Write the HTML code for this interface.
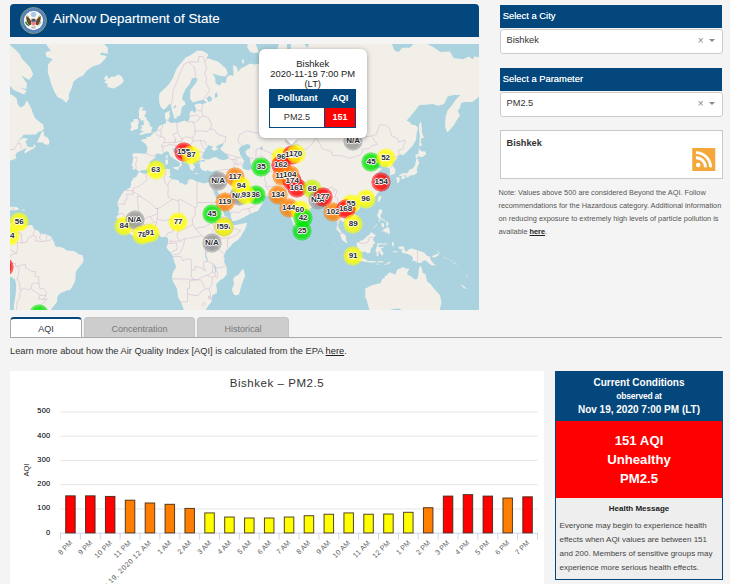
<!DOCTYPE html>
<html><head><meta charset="utf-8"><title>AirNow Department of State</title>
<style>
*{box-sizing:border-box;margin:0;padding:0}
html,body{width:730px;height:584px;overflow:hidden;background:#f4f4f4;font-family:"Liberation Sans",sans-serif;color:#333}
.abs{position:absolute}
#hdr{position:absolute;left:10px;top:4px;width:469px;height:33px;background:#04477c;border-radius:4px 4px 0 0;color:#fff}
#hdr .t{position:absolute;left:43px;top:7px;font-size:13.4px;line-height:16px;white-space:nowrap;text-shadow:0 0 1px rgba(255,255,255,.3)}
#map{position:absolute;left:10px;top:44px;width:469px;height:266px;overflow:hidden;background:#aad3df}
#map svg{position:absolute;left:0;top:0}
.mk{position:absolute;width:20px;height:20px;margin:-10px 0 0 -10px;border-radius:50%;background:radial-gradient(circle closest-side,rgba(var(--c),.82) 0,rgba(var(--c),.82) 70%,rgba(var(--c),.6) 80%,rgba(var(--c),.55) 93%,rgba(var(--c),0) 100%)}
.ml{position:absolute;width:30px;margin:-5px 0 0 -15px;text-align:center;font-size:8px;line-height:10px;font-weight:bold;color:#2a2a2a;text-shadow:-1px 0 .5px #fff,1px 0 .5px #fff,0 -1px .5px #fff,0 1px .5px #fff,0 0 2px #fff,0 0 2px #fff}
#pop{position:absolute;left:249px;top:4.5px;width:107.5px;height:89.5px;background:#fff;border-radius:6px;box-shadow:0 1px 5px rgba(0,0,0,.35);font-size:9.4px;line-height:9.9px;color:#222;text-align:center}
#tip{position:absolute;left:275px;top:94px;width:13px;height:7px;overflow:hidden}
#tip:after{content:"";position:absolute;left:2px;top:-4.5px;width:9px;height:9px;background:#fff;transform:rotate(45deg);box-shadow:0 1px 4px rgba(0,0,0,.35)}
.ph{position:absolute;background:#04477c;color:#fff;font-size:9.4px;line-height:21.5px;padding-left:3.3px;white-space:nowrap;text-shadow:0 0 .6px rgba(255,255,255,.8)}
.sel{position:absolute;background:#fff;border:1px solid #ccc;border-radius:3px;font-size:9.25px;line-height:21px;padding-left:6px;color:#333}
.sel .x{position:absolute;right:18px;top:-.5px;font-size:10px;color:#888}
.sel .a{position:absolute;right:6.6px;top:9.2px;width:0;height:0;border:3px solid transparent;border-top:3.2px solid #888;border-bottom:0}
.tab{position:absolute;top:317px;height:21px;font-size:9px;line-height:22.5px;text-align:center;border-radius:4px 4px 0 0}
.tab.off{background:#cdcdcd;color:#777;height:20px;border:1px solid #c4c4c4;border-bottom:0}
.gl{position:absolute;left:60.5px;width:477.0px;height:1px;background:#e6e6e6}
.ax{position:absolute;left:60.5px;width:477.0px;height:1px;background:#ccd6eb}
.tk{position:absolute;width:1px;height:6px;background:#ccd6eb}
.yl{position:absolute;left:20px;width:30.5px;text-align:right;font-size:7.4px;line-height:10px;color:#222;letter-spacing:.3px;text-shadow:0 0 .4px rgba(0,0,0,.5)}
.bar{position:absolute;width:11.4px;border:1px solid rgba(40,30,20,.75)}
.xl{position:absolute;width:100px;text-align:right;font-size:7.2px;line-height:9px;color:#5e5e5e;white-space:nowrap;transform-origin:100% 50%;transform:rotate(-45deg)}
a{color:#222;font-weight:bold;text-decoration:underline}
</style></head><body>
<div id="hdr">
<svg class="abs" style="left:10px;top:3px" width="27" height="27" viewBox="0 0 27 27"><g style="filter:blur(.3px)"><circle cx="13.500" cy="13.500" r="13" fill="#4778b2" stroke="#b4b46c" stroke-width=".7"/><circle cx="13.500" cy="13.500" r="11.300" fill="none" stroke="#7fa3cf" stroke-width="1.600" stroke-dasharray="1 .6" opacity=".55"/><circle cx="13.500" cy="13.500" r="9.700" fill="#f6f6f3"/><circle cx="13.500" cy="7.400" r="2.700" fill="#a8cbe3"/><path d="M6.300 9c1.800.600 3.600 2.400 4.800 5.200l.300 3.200-2.200 1c-2-2.200-3.400-5.600-2.900-9.400zM20.700 9c-1.800.600-3.600 2.400-4.800 5.200l-.3 3.200 2.200 1c2-2.200 3.400-5.600 2.900-9.400z" fill="#6a4a22"/><path d="M7.200 8.600l1.600 1.200M19.800 8.600l-1.600 1.200" stroke="#c9b04a" stroke-width="1"/><path d="M11.400 12.900h4.200v3.600c0 1.300-2.100 2.300-2.100 2.300s-2.100-1-2.100-2.300z" fill="#ef7f86"/><rect x="11.400" y="12.900" width="4.200" height="1.700" fill="#2d5fa0"/><path d="M11.600 11.800h3.800v1.100h-3.800z" fill="#5a3d1c"/><path d="M5.600 14.800c.5 2 1.700 3.200 3.400 3.600" stroke="#3f8a46" stroke-width="1.500" fill="none"/><path d="M18.300 18.200l2.800-3.400" stroke="#a8a8a8" stroke-width="1.200"/><path d="M11 19.600h5l-.8 1.800h-3.400z" fill="#9a9a9a" opacity=".7"/></g></svg>
<div class="t">AirNow Department of State</div></div>
<div id="map">
<svg width="469" height="266" viewBox="0 0 469 266"><g style="filter:blur(.35px)"><path d="M122.1 110.7L124.4 108.9L132.0 109.4L136.2 109.7L137.3 106.3L137.3 102.7L135.4 99.7L130.7 96.6L133.9 94.9L136.6 95.2L136.2 92.3L137.5 93.1L140.0 92.8L142.6 89.9L143.0 88.4L146.4 87.2L147.8 84.7L148.7 82.2L152.9 80.6L156.1 79.3L155.9 75.7L155.0 73.7L155.0 69.0L159.7 66.5L159.4 70.7L160.3 71.4L158.0 76.4L160.5 79.0L165.6 78.4L166.8 79.3L170.4 78.0L174.4 76.4L177.2 77.7L179.7 74.8L179.5 69.6L180.6 67.2L182.5 66.5L183.7 68.6L185.4 68.6L186.0 64.3L184.2 61.0L188.0 59.5L192.8 59.9L197.0 58.4L193.8 56.1L189.0 56.5L183.1 58.4L180.3 55.3L180.1 50.6L180.4 46.1L186.1 38.7L187.7 35.1L185.6 33.8L182.0 34.2L180.1 39.6L175.7 44.8L172.7 51.4L172.1 55.3L174.9 57.7L175.5 60.3L171.9 63.2L170.9 69.0L170.0 71.7L167.1 72.4L166.6 74.4L164.1 74.4L163.7 71.7L162.4 67.9L160.9 62.1L159.7 59.5L157.7 62.1L154.8 65.1L152.9 65.4L150.2 62.1L149.1 58.0L149.1 52.2L149.5 49.4L152.9 46.1L155.8 43.5L159.5 39.6L162.4 35.1L164.3 30.5L166.2 25.6L169.0 21.6L171.9 17.9L175.7 13.6L181.4 10.8L187.1 6.8L191.8 6.8L195.6 8.5L198.5 10.8L196.6 14.1L202.3 15.8L208.0 17.4L215.6 24.1L217.9 29.0L215.6 32.4L210.8 31.9L205.1 30.5L202.3 29.5L205.1 33.8L205.7 39.6L209.9 41.8L211.8 38.3L215.6 39.2L216.6 33.8L219.4 30.9L223.2 31.9L223.6 28.1L222.8 21.0L227.0 23.1L227.9 28.1L230.8 24.6L234.6 22.6L240.3 19.5L244.1 20.5L247.9 20.0L253.6 19.0L255.5 13.6L261.2 16.3L266.9 19.0L269.8 22.1L270.7 17.9L266.9 14.1L266.9 6.8L270.7 -5.5L276.4 -4.2L277.4 6.8L276.4 17.9L277.4 25.6L274.5 30.5L279.2 28.1L280.2 20.5L279.2 12.5L281.1 0.8L282.1 -5.5L291.6 -8.8L292.5 -2.3L297.3 3.8L303.0 -8.8L310.6 -23.1L329.6 -39.4L339.1 -39.4L354.3 -12.2L348.6 -10.8L354.3 -8.8L363.8 -6.8L373.3 -5.5L380.9 -2.3L384.7 6.8L388.5 7.9L392.3 3.8L399.9 3.8L405.6 -2.3L415.1 -1.1L424.6 3.8L430.3 7.9L439.8 7.4L443.6 14.1L453.1 15.2L458.8 12.5L462.6 15.2L464.5 12.5L474.0 13.6L485.4 17.9L485.4 48.2L475.9 49.0L470.2 51.4L462.6 58.0L455.0 58.0L451.2 58.8L449.3 65.4L447.4 66.1L449.9 71.7L447.0 75.7L443.6 81.6L440.4 85.3L437.3 88.4L435.0 82.2L435.6 72.4L437.5 66.5L441.7 61.8L445.5 56.1L450.2 51.0L443.6 51.0L437.9 52.2L434.1 59.9L428.4 61.8L422.7 59.9L415.1 60.7L409.4 61.0L401.8 70.7L396.7 76.4L400.9 79.0L400.9 80.6L405.6 81.3L408.1 83.8L406.5 89.9L406.2 95.7L402.8 101.4L398.0 106.8L393.2 111.3L390.4 110.2L387.9 112.5L386.0 115.8L382.8 118.3L381.9 120.1L385.3 125.6L385.3 129.2L382.8 130.6L379.8 131.5L380.1 128.0L379.6 124.4L377.1 123.2L377.7 119.6L375.8 118.6L370.6 121.1L371.4 116.9L369.5 116.1L365.7 120.3L363.2 121.5L365.3 124.2L369.1 123.7L372.4 124.9L369.5 126.8L366.3 130.3L368.5 133.8L371.0 137.4L371.2 139.6L368.5 140.9L371.4 142.0L370.4 145.3L367.6 149.2L364.8 153.2L361.9 155.6L356.8 157.7L354.3 158.5L349.5 160.0L349.2 162.0L348.0 159.6L344.8 159.4L342.3 161.6L340.4 164.6L342.9 168.6L346.3 171.6L347.5 176.5L346.7 179.4L342.9 181.3L339.5 184.8L338.7 182.3L335.3 180.4L334.0 178.0L331.3 177.1L330.5 175.5L329.6 175.9L328.3 180.4L328.3 183.7L330.4 186.2L331.5 188.4L334.0 189.6L336.1 192.8L336.2 196.5L337.6 198.7L336.2 198.9L332.1 196.1L330.4 191.9L330.2 189.2L327.7 186.5L326.4 185.6L326.8 182.3L327.1 178.4L325.2 172.6L324.3 169.0L320.9 171.0L318.8 170.6L319.1 166.6L317.2 163.0L314.4 159.6L314.0 157.3L311.5 157.9L308.7 158.9L304.9 159.6L303.9 162.6L301.1 163.8L296.0 169.4L292.2 171.4L291.6 175.5L291.4 178.4L290.3 181.7L288.2 184.4L286.9 186.0L284.9 183.7L283.2 179.4L281.7 176.5L280.6 172.6L279.1 169.6L277.9 164.2L277.9 160.2L276.8 160.4L274.5 161.0L272.6 160.2L270.7 157.9L273.2 156.7L270.3 155.9L267.7 154.4L266.3 151.7L262.5 151.9L256.6 151.9L251.7 151.5L248.5 150.8L246.9 148.1L243.5 148.9L239.3 146.8L236.5 144.2L234.6 141.2L232.5 140.7L230.8 141.8L231.8 144.9L233.6 147.7L235.0 148.9L236.1 152.7L236.9 150.0L237.6 152.3L237.4 153.8L239.5 154.0L242.2 154.0L244.7 151.7L246.6 149.8L246.8 152.5L248.3 154.6L251.1 155.2L253.2 157.5L251.3 161.6L249.4 164.6L247.9 167.0L244.7 168.0L238.8 170.6L232.7 174.1L225.1 176.9L222.2 177.1L220.9 173.0L220.7 169.6L217.5 164.6L214.1 160.0L212.8 155.4L210.3 152.3L207.2 146.4L205.7 144.9L206.1 142.7L205.0 145.9L204.6 146.4L202.9 144.7L201.5 141.8L201.0 139.0L204.6 138.7L205.9 136.0L207.2 132.6L207.8 128.5L208.0 126.6L205.7 126.3L203.4 127.5L200.4 127.8L197.7 126.1L195.6 127.5L192.8 126.3L191.5 125.6L189.6 122.5L190.5 120.8L189.2 119.6L189.4 118.1L191.8 117.4L194.7 117.4L194.9 115.8L194.9 115.3L199.1 115.6L203.2 113.3L206.5 113.3L208.9 115.1L212.8 116.1L215.6 115.8L218.4 114.6L218.6 112.0L215.6 109.4L212.8 107.3L210.5 105.5L210.8 103.6L212.4 102.2L214.1 99.4L210.8 100.0L206.7 101.9L206.1 103.6L208.9 104.9L206.9 105.5L204.2 107.1L203.1 106.5L201.3 104.4L203.4 102.5L200.4 101.9L198.9 101.1L197.9 101.6L196.0 104.9L193.9 108.1L192.8 110.7L192.2 112.0L193.0 114.3L194.9 115.3L194.5 115.8L191.8 116.1L190.3 117.1L189.0 116.6L186.1 116.1L184.8 117.6L185.8 118.1L183.1 117.4L182.7 119.6L183.9 121.1L185.2 123.2L183.3 124.7L183.5 126.8L182.2 126.8L180.8 126.1L179.9 123.7L179.7 122.3L178.0 119.6L176.5 117.1L176.6 114.1L174.8 112.0L171.9 110.2L169.0 108.1L167.9 105.5L166.8 104.9L165.4 105.5L165.6 103.6L163.2 104.4L163.0 106.8L165.4 109.4L166.6 112.3L170.0 113.6L172.8 116.1L174.8 117.9L174.4 118.8L171.9 117.1L171.1 118.8L172.1 120.8L170.2 123.5L169.3 123.2L170.2 119.6L169.2 118.3L167.7 116.9L164.3 115.3L162.8 113.8L160.5 112.3L159.5 110.7L159.0 108.4L156.7 107.1L154.8 108.4L153.8 108.6L151.4 110.5L149.1 109.7L147.2 109.4L145.5 110.5L145.7 113.3L143.6 115.1L141.1 116.4L139.2 119.1L140.0 121.3L138.5 123.2L138.3 124.2L135.8 126.1L131.2 126.3L129.5 127.8L127.8 127.1L127.4 125.6L125.5 125.2L122.7 125.6L122.9 122.3L121.5 121.3L122.7 117.9L123.1 114.1ZM128.4 128.5L129.5 128.2L133.9 129.6L135.8 130.1L137.7 128.7L139.6 128.2L142.1 126.8L145.3 126.1L149.1 126.1L152.9 125.6L156.7 124.9L158.4 124.9L160.5 125.6L159.5 127.1L160.1 129.2L160.5 131.5L159.0 132.6L159.2 133.6L160.9 134.2L163.3 135.4L166.2 135.8L168.7 136.5L169.4 138.5L172.8 139.6L175.7 140.9L177.6 139.4L177.6 136.7L180.4 135.1L183.3 135.8L187.1 137.8L190.9 138.5L194.7 139.6L197.2 138.5L198.5 138.1L201.0 139.0L201.5 141.8L201.7 143.8L203.2 146.4L204.2 149.2L206.1 153.4L207.2 155.4L209.7 158.5L210.3 160.6L210.5 164.6L212.8 166.6L214.3 171.6L217.5 173.6L220.3 176.5L221.9 177.5L221.9 179.4L224.1 181.3L227.0 180.8L230.8 180.0L234.6 179.2L237.1 178.8L236.5 181.3L234.6 186.2L232.7 189.0L230.8 192.8L227.0 196.6L223.2 199.1L220.3 202.4L218.4 204.8L216.2 206.3L214.6 210.0L213.5 212.8L214.6 214.7L214.3 218.6L215.6 221.1L216.6 222.4L216.7 226.3L216.9 230.2L213.7 234.2L209.9 236.2L208.0 238.2L206.1 240.2L206.7 244.3L207.1 248.4L202.3 251.5L201.9 254.7L201.2 258.4L198.5 261.2L196.6 264.5L193.8 267.4L190.9 269.5L188.4 270.2L183.3 270.4L177.6 272.0L174.6 270.6L174.4 267.2L172.5 262.3L170.9 258.1L168.1 253.6L167.1 246.3L166.8 244.3L162.4 236.2L162.0 232.2L163.3 227.3L165.6 224.4L165.8 221.5L164.3 218.2L163.0 212.8L162.4 210.9L160.5 208.6L157.7 205.6L156.3 202.7L157.7 200.4L158.0 197.6L158.2 195.3L157.7 193.8L155.8 192.7L152.9 193.0L151.0 193.2L149.7 191.5L148.0 189.4L144.3 189.4L141.5 190.2L138.7 191.3L135.8 192.3L133.5 191.7L131.0 191.5L128.2 192.3L125.3 193.0L122.5 191.5L119.1 189.2L116.8 187.1L114.5 184.6L114.3 183.3L111.7 180.8L110.9 178.6L107.9 177.7L107.7 175.5L106.3 173.2L108.2 170.6L108.6 166.6L109.0 163.6L107.3 160.6L107.5 158.5L109.2 154.8L111.3 151.3L112.2 149.6L114.5 146.6L117.8 145.3L120.6 142.7L121.2 140.5L121.0 138.3L123.3 134.2L126.7 132.4ZM233.3 224.4L235.2 231.2L234.2 234.2L231.8 240.2L229.8 247.4L228.9 250.5L225.5 251.5L223.2 249.4L221.9 245.3L224.0 240.2L223.2 235.2L225.1 232.2L227.9 231.2L230.8 227.3ZM128.8 91.1L132.9 90.5L136.8 89.3L140.5 89.0L142.3 87.8L140.9 86.9L142.8 83.5L140.2 82.2L139.8 80.3L139.2 78.4L136.9 75.7L135.8 72.7L133.9 72.4L135.8 69.3L136.2 66.8L132.9 66.5L132.0 65.8L133.7 63.2L130.1 63.2L128.6 67.2L129.0 70.7L129.0 74.8L130.5 74.1L130.3 76.7L133.1 76.1L133.9 79.3L133.7 81.3L131.0 81.3L131.6 82.8L131.8 84.4L129.7 85.6L131.4 86.6L133.5 87.2L133.9 87.8L131.0 88.4ZM128.2 84.7L127.8 81.3L129.0 77.4L127.6 75.1L124.0 75.1L123.3 77.7L120.6 78.4L121.0 81.3L121.7 83.2L120.0 85.3L121.2 86.9L123.8 86.0L127.2 85.0ZM96.8 42.3L100.7 44.0L103.9 44.4L109.2 41.4L111.9 39.6L113.8 36.5L111.7 32.4L108.6 30.5L104.8 32.4L101.0 32.8L98.8 35.1L96.8 30.9L94.0 34.2L94.9 36.0L97.6 35.6L94.0 38.3L97.8 40.1ZM56.2 58.8L52.2 55.3L47.5 53.0L44.6 48.2L41.8 41.8L39.8 35.1L37.8 28.1L38.0 20.5L42.7 15.2L36.0 12.5L35.7 7.9L40.8 6.8L34.2 -2.3L33.2 -12.2L29.4 -23.1L25.6 -26.9L10.4 -26.9L0.9 -48.5L16.1 -75.3L44.6 -95.3L82.6 -110.9L101.6 -88.2L116.8 -81.6L105.4 -63.8L106.3 -43.8L103.5 -30.9L101.6 -19.3L102.5 -12.2L97.8 -6.8L97.8 -0.4L93.0 -1.1L97.8 3.8L97.8 9.7L91.2 8.5L90.2 10.8L96.8 11.9L94.9 15.2L90.2 20.0L82.6 22.6L76.9 26.6L73.1 31.4L68.3 33.8L63.6 37.4L61.7 44.0L58.8 50.2L58.8 55.0ZM-50.4 141.6L-4.8 141.6L-3.8 129.9L-4.8 125.9L-3.1 122.5L-1.0 119.1L-1.0 117.1L2.8 115.8L6.6 114.3L5.3 111.8L6.2 109.2L9.4 107.3L12.3 106.0L14.2 104.9L17.0 104.1L14.2 108.1L15.2 109.4L19.0 106.8L23.7 104.6L25.6 102.7L24.7 100.0L22.8 103.3L19.9 103.3L17.0 102.2L16.5 99.7L15.2 97.7L17.4 95.7L17.6 94.6L13.2 94.0L9.4 96.0L6.6 99.4L7.6 97.2L12.3 92.8L13.4 90.8L19.9 90.5L25.6 90.5L28.5 87.8L31.7 86.9L33.8 84.7L33.2 80.6L30.3 78.4L25.6 74.8L22.8 69.6L21.8 65.4L19.0 59.9L16.7 56.5L14.2 61.8L10.4 63.6L7.6 59.9L6.6 54.2L2.8 51.4L-1.9 49.0L-7.7 48.2L-8.6 54.2L-7.7 59.9L-8.6 65.4L-5.8 70.7L-10.5 77.4L-11.4 86.9L-50.4 88.4ZM26.9 98.3L33.2 98.6L34.2 100.3L38.5 100.8L39.5 98.6L38.9 95.7L37.6 93.4L34.2 92.0L33.6 87.5L34.2 86.6L31.3 88.4L30.0 92.0L28.5 94.9ZM23.1 30.0L19.9 23.1L12.3 15.2L9.4 9.7L4.7 5.0L-1.9 -0.4L-8.6 -5.5L-31.4 -5.5L-31.4 39.6L-8.6 39.6L-1.9 39.6L3.8 46.1L8.9 48.2L14.2 50.6L16.7 46.9L9.4 43.1L16.1 45.2L17.0 39.6L11.3 31.4L19.0 36.0L21.8 32.8ZM-7.7 185.2L-3.8 181.3L-2.5 180.2L0.9 179.6L3.8 177.7L3.4 180.4L3.9 182.3L6.6 179.4L6.6 178.0L9.4 180.0L10.4 181.3L14.2 181.1L17.0 181.9L19.9 181.0L21.8 181.0L22.8 182.3L24.1 185.2L27.5 186.2L30.3 189.4L35.1 190.2L38.0 190.9L41.4 193.0L43.1 196.6L44.6 199.5L44.6 201.4L47.5 203.3L49.3 202.7L54.1 204.3L56.0 206.3L59.8 206.7L63.6 206.9L66.5 208.6L69.3 210.5L72.5 211.3L73.5 215.1L73.1 218.6L70.2 221.7L68.3 224.4L66.5 226.3L65.5 230.2L65.5 235.2L64.2 239.2L61.9 243.2L60.0 246.1L57.0 246.3L54.1 247.8L51.2 248.8L48.4 251.1L47.3 253.6L47.1 257.5L44.6 261.2L41.8 264.5L39.8 267.9L38.0 270.2L35.1 272.2L31.3 271.3L28.8 270.4L31.3 276.0L21.8 282.0L16.1 287.0L16.1 297.3L10.4 311.4L8.5 317.5L0.9 320.6L-2.9 311.4L-1.0 297.3L-0.1 284.5L0.9 277.2L3.8 267.9L3.8 261.2L5.7 250.5L6.2 240.2L4.7 235.2L-2.9 230.8L-5.8 227.3L-8.6 220.5L-11.4 215.7L-14.7 211.9L-13.0 207.7L-13.9 204.3L-12.4 200.4L-10.1 198.5L-7.3 193.8L-7.7 189.0ZM388.3 132.6L390.4 131.9L393.2 131.7L396.1 131.3L396.5 133.1L397.6 133.8L399.7 131.7L400.5 131.3L403.3 131.3L405.2 130.3L407.3 128.7L406.7 126.1L407.5 122.5L409.4 119.3L408.4 117.1L408.3 114.8L406.2 115.3L405.6 118.3L405.2 121.3L403.3 123.7L400.5 126.1L400.3 124.4L399.3 126.1L398.0 128.5L397.0 128.9L394.2 129.2L391.5 129.4L389.3 131.5ZM388.3 132.9L390.0 134.5L389.4 137.2L388.5 138.7L387.0 139.0L387.0 136.0L386.0 134.9L386.2 133.8ZM391.4 132.6L394.6 131.9L395.5 133.1L394.6 134.2L392.3 135.4L391.2 134.2ZM406.2 114.6L407.9 113.8L407.5 112.0L411.9 113.3L416.0 110.2L415.5 107.6L411.3 107.3L409.0 104.4L408.6 108.1L408.1 110.2L406.2 110.2L405.2 112.5ZM409.4 102.7L412.2 100.8L410.7 98.6L411.3 94.3L414.1 93.7L411.9 88.4L411.9 83.8L411.1 78.0L410.0 78.4L409.0 81.3L409.0 86.3L409.8 91.4L409.4 97.2ZM369.5 151.9L371.4 152.3L370.4 155.4L369.1 158.5L367.8 156.5L368.2 153.8ZM346.1 164.0L349.5 162.4L350.5 163.2L349.2 165.6L347.6 166.2L346.1 165.2ZM368.7 165.6L371.8 165.6L372.4 168.6L370.4 171.0L370.6 173.6L372.0 174.5L375.2 176.5L375.2 177.5L372.5 175.7L369.5 175.1L368.7 173.9L367.6 172.6L367.2 170.0L368.4 169.6ZM371.4 188.1L374.2 185.0L377.9 182.7L379.6 185.2L379.9 189.0L378.0 190.6L377.7 188.4L375.2 188.6L373.9 187.1ZM375.8 177.5L378.0 178.0L378.4 180.4L377.1 182.3L376.1 181.3L376.7 179.4ZM371.4 178.8L373.7 179.4L374.2 181.3L373.9 183.7L372.4 182.9L371.4 181.3ZM362.3 185.6L366.6 181.3L367.0 179.8L365.7 181.3L362.9 184.2ZM368.4 175.7L370.3 176.1L369.9 177.8L368.9 177.3ZM346.7 200.8L346.7 198.4L349.2 198.0L350.9 196.6L354.3 195.3L356.2 192.7L359.0 190.9L361.3 188.1L363.2 189.4L366.1 191.5L363.8 193.0L363.0 195.1L363.8 197.6L365.7 199.5L363.4 200.1L362.9 202.7L360.9 204.3L360.6 207.1L360.0 209.0L357.3 209.2L355.2 207.7L352.0 208.1L349.0 206.9L348.6 204.3L347.1 202.7ZM339.5 214.4L341.4 212.8L345.4 214.2L349.5 214.5L350.5 213.6L353.7 214.5L357.1 216.1L357.0 218.0L353.4 217.4L348.6 216.8L344.8 216.3L341.8 215.5ZM357.1 217.0L361.3 217.0L365.7 217.2L365.7 218.4L360.9 218.6L357.1 218.2ZM367.2 217.4L373.3 217.0L373.3 218.2L367.2 218.4ZM374.2 221.1L377.1 218.6L381.5 217.4L379.0 219.5L375.2 221.1ZM365.7 219.5L369.1 220.1L367.6 221.1ZM367.2 199.9L369.1 198.9L372.4 199.5L375.6 199.5L377.5 198.4L376.3 200.6L372.4 200.4L369.1 200.6L367.8 202.7L370.1 203.1L373.9 202.7L374.1 203.3L371.0 204.6L372.2 207.5L373.7 209.4L372.4 211.7L370.4 210.1L369.3 206.7L368.4 208.1L368.4 211.9L366.6 211.9L366.6 208.1L365.3 206.5L366.3 203.9L367.2 201.0ZM388.5 202.9L391.4 202.2L394.2 202.9L394.6 206.2L396.1 207.7L399.9 204.8L401.8 204.4L407.5 206.3L414.1 208.6L416.6 211.5L419.9 212.8L420.4 215.3L421.8 217.6L424.6 220.5L426.1 221.7L420.8 220.9L417.9 218.2L415.1 216.3L412.2 217.2L411.3 219.0L407.5 218.8L403.7 216.6L401.8 217.4L403.1 214.7L401.8 211.9L397.0 209.8L393.2 209.0L391.9 209.2L392.3 207.1L390.4 206.7L393.8 205.8L390.4 205.2L388.5 204.3ZM421.4 212.2L424.6 210.9L428.4 209.4L428.8 210.9L426.5 212.8L423.6 213.4ZM381.9 198.0L383.8 198.5L384.1 200.8L382.8 202.9L382.2 200.8ZM382.8 207.1L388.1 207.5L387.5 208.4L382.8 208.1ZM355.2 244.3L356.6 243.9L361.5 241.2L365.7 240.2L370.4 239.2L371.8 236.2L372.4 234.2L374.4 234.8L374.6 232.6L377.1 230.8L379.9 228.3L382.8 229.8L385.6 230.2L386.2 228.3L387.2 225.9L388.5 224.8L391.4 224.4L391.4 223.0L396.1 224.4L399.5 224.8L398.0 227.3L397.0 230.2L400.9 232.2L404.3 235.2L407.1 235.2L408.4 231.2L408.6 226.3L409.8 222.4L410.5 221.8L412.2 225.3L412.6 228.9L415.7 230.2L416.0 233.2L417.4 237.8L420.8 240.2L423.6 244.3L426.1 246.9L429.9 251.1L430.9 255.8L431.4 258.4L430.3 263.4L429.4 266.8L427.4 269.0L426.5 271.3L424.6 278.4L418.9 280.8L413.2 280.3L406.5 279.6L401.8 273.6L398.0 272.5L396.1 271.3L394.2 267.9L389.4 264.5L384.7 264.7L379.0 266.3L375.2 267.9L374.2 270.2L367.6 270.2L363.8 272.5L358.1 270.9L359.4 265.6L358.1 261.2L356.6 255.8L354.9 252.6L355.4 249.4ZM291.2 182.9L293.1 184.2L295.0 187.1L294.6 189.4L292.7 190.2L291.4 189.0L291.0 185.8ZM237.4 3.8L240.3 7.9L244.1 9.1L248.9 8.5L246.0 0.8L245.0 -5.5L247.9 -15.7L253.6 -26.9L268.8 -35.1L265.0 -23.1L253.6 -15.7L249.8 -5.5L240.3 -5.5L237.4 0.8ZM163.2 123.2L169.2 122.5L168.3 126.3L163.3 124.2ZM155.2 115.8L158.0 115.8L157.8 120.3L155.6 120.8ZM155.9 112.0L157.5 110.7L157.7 114.6L156.3 114.6ZM184.2 128.9L189.6 129.6L185.2 130.3ZM201.0 130.3L205.3 128.7L204.0 130.3L202.3 131.3ZM-1.9 166.0L0.9 162.8L6.6 163.0L9.6 165.4L4.7 166.2L1.8 166.2ZM11.9 165.6L15.0 165.8L14.6 166.6L11.9 166.6ZM451.2 240.4L454.0 242.2L456.9 244.9L455.9 245.1L453.1 243.2L450.8 240.8ZM240.9 177.3L243.1 177.3L242.2 177.8ZM144.2 119.3L145.7 118.6L145.9 119.8L144.9 120.1ZM231.8 15.8L233.6 15.2L234.2 19.0L232.3 19.5ZM433.3 211.9L435.8 214.4L434.9 214.5L433.5 212.8ZM436.9 214.2L438.9 215.3L438.5 215.7L436.8 214.5ZM440.2 215.9L443.2 217.4L442.8 217.8L440.0 216.5ZM442.8 219.1L445.1 220.1L444.2 220.3L442.8 219.7ZM444.7 217.4L446.3 219.5L445.7 219.7L444.5 217.8ZM446.1 221.1L448.0 221.8L447.0 222.0ZM456.1 229.6L457.3 231.4L456.3 231.4ZM457.3 232.2L458.4 233.2L457.7 233.4ZM459.2 235.4L459.9 235.8L459.2 236.0ZM461.1 238.8L461.6 239.4L461.1 239.4ZM426.1 206.3L429.4 208.6L430.3 210.3L429.5 209.4L426.5 206.9ZM324.1 198.7L325.6 199.7L325.0 200.3ZM326.9 203.3L328.3 204.6L327.7 204.8ZM339.7 204.4L342.3 206.3L341.0 207.1Z" fill="#f2efe9"/><path d="M229.8 103.6L232.7 101.4L237.4 100.0L240.3 101.1L239.9 104.4L237.1 105.5L236.5 106.8L235.2 107.3L236.3 110.7L239.2 113.3L240.3 115.8L240.1 118.3L241.6 120.3L242.0 124.9L238.4 126.3L235.5 125.6L232.7 124.4L232.5 122.0L233.3 120.1L233.6 117.6L235.2 117.4L233.6 116.6L232.3 113.8L230.2 110.7L229.8 108.1L228.5 106.3ZM200.0 202.4L201.3 200.8L204.2 200.8L204.6 203.3L203.2 206.2L200.4 206.3ZM336.6 86.6L338.7 86.9L341.9 83.8L345.8 80.3L348.2 75.7L348.4 73.1L347.1 73.7L344.8 78.4L341.0 82.2L338.1 84.7ZM279.2 104.9L281.1 101.1L285.9 100.5L289.7 100.5L289.3 101.9L284.9 101.9L281.7 103.8L280.6 105.7ZM250.4 103.3L252.1 102.2L252.8 104.6L251.3 106.5L250.4 105.5ZM198.3 58.0L201.3 56.9L202.3 54.2L199.4 51.8L196.6 54.2ZM205.1 54.2L208.0 52.2L206.5 47.7L204.8 50.2ZM195.1 207.9L196.0 210.0L198.1 217.4L197.4 217.6L195.1 212.4ZM204.2 219.7L205.5 222.4L206.1 228.3L205.3 228.7L204.4 223.4ZM163.2 63.6L165.8 60.7L166.2 62.9L163.9 64.3Z" fill="#aad3df"/><path d="M122.9 113.6L127.2 113.6L126.5 118.3L125.3 119.6L126.3 122.8L125.5 125.2M136.2 109.7L140.9 111.5L145.5 112.3M144.3 88.1L147.6 91.4L151.0 92.8L155.2 94.3L154.0 98.3L151.0 102.2L152.9 103.0L152.9 107.6L153.8 108.6M166.8 79.3L167.5 88.4L162.8 90.5L165.8 94.9L164.3 98.6L157.8 98.6L154.0 98.3M152.9 81.3L151.0 86.0L151.0 89.0L151.0 92.8M146.1 87.2L151.0 86.0M155.9 76.1L158.2 76.4M177.2 77.7L182.9 77.7L185.0 83.8L185.2 89.9L182.5 94.0L175.7 92.8L171.9 95.2L167.5 88.4M152.9 103.0L159.5 100.5L165.6 101.4L165.6 103.6M164.3 98.6L165.8 94.9M164.3 98.6L171.9 97.2L171.9 95.2M171.9 97.2L170.6 100.5L165.6 101.4M182.5 94.0L183.1 97.2L179.5 102.2L178.2 102.5L175.3 103.0L170.6 100.5M183.1 97.2L190.1 96.3L193.2 104.1L196.0 104.9M190.1 96.3L195.1 97.2L196.6 101.6M193.9 108.9L190.9 107.9L182.7 107.6L180.3 105.7L178.2 102.5M182.7 107.6L182.2 112.5L183.1 115.1L189.8 114.1L192.8 113.3M189.8 114.1L189.0 116.6M176.5 113.6L178.7 115.8L179.5 116.4L183.1 115.1M175.7 105.7L176.5 109.4L174.8 112.0M165.6 104.1L170.6 100.5M169.6 104.9L175.7 105.7L176.1 103.0M176.5 109.4L178.5 111.0L180.4 112.5L182.2 112.5M177.6 111.8L176.5 113.6M160.9 62.1L162.8 54.2L163.0 46.1L167.1 37.4L169.0 31.9L173.8 20.5L178.5 17.9M185.6 33.8L184.6 23.6L178.5 17.9M178.5 17.9L188.4 17.9L189.0 12.5L192.8 12.5L194.7 17.4L198.1 13.6M194.7 17.4L196.6 24.6L194.7 28.5L196.6 34.2L196.0 38.3L199.6 46.5L192.8 56.1M192.8 59.9L191.7 67.2L193.2 71.7L190.1 73.4L188.6 76.1L184.2 79.0L182.9 77.7M186.0 65.8L191.7 67.2M179.7 72.1L187.1 71.0L190.1 73.4M184.4 86.9L191.8 86.9L197.7 87.5L200.0 85.0M193.2 71.7L198.3 73.7L201.7 80.9L200.0 85.0L205.0 86.0L207.2 90.2L211.8 91.7L215.8 92.6L215.2 97.5L212.2 99.7M215.6 109.7L222.8 111.8L227.9 113.6L231.9 113.8M218.4 114.6L222.2 115.6L225.1 115.1L227.9 113.6M222.2 115.6L224.7 119.1L223.8 123.2L224.7 125.2M224.7 119.1L227.9 121.1L230.8 119.1L232.5 122.0M225.1 115.1L227.9 121.1M208.4 128.0L209.3 126.1L211.8 126.1L217.1 125.4L220.2 125.4L224.7 125.2M220.2 125.4L217.9 130.8L213.3 134.0L209.5 136.5L207.2 135.6M213.3 134.0L214.1 136.9L216.4 137.4L219.4 139.2L224.5 143.3L227.9 143.6L230.2 141.6L230.8 141.8M224.7 125.2L227.0 128.7L225.9 132.6L230.2 139.4L230.8 141.6M227.9 143.6L229.8 144.7L231.6 144.9M206.1 142.7L208.2 143.3L210.8 141.6L211.8 140.5L209.9 138.3L214.1 136.9M207.2 135.6L207.1 138.3L206.1 142.7M206.3 134.7L207.2 135.6L207.6 134.2L209.1 132.2L208.0 131.3M220.9 169.8L221.7 167.8L228.9 168.6L232.3 165.6L238.4 164.6L244.1 162.6L245.4 158.5L244.5 157.1L239.5 156.7L237.6 154.0M238.4 164.6L240.5 169.4M244.5 157.1L246.0 154.2L246.4 151.1M204.6 138.7L205.9 142.7M242.0 124.9L246.4 123.0L250.8 124.2L255.9 126.6L255.5 131.5L254.5 133.3L255.3 138.3L257.0 139.4L255.3 142.0M255.3 142.0L259.7 147.7L256.6 151.9M255.3 142.0L258.4 142.9L265.6 141.8L266.3 139.0L271.3 137.4L272.6 133.3L274.9 132.4L275.6 127.3L281.9 125.2M255.9 128.9L262.1 127.3L265.9 124.7L268.8 125.6L275.6 126.3L275.6 122.5L281.9 125.2M239.3 113.8L246.0 115.1L246.0 105.5L250.9 103.8L255.5 107.1L265.0 110.7L268.8 115.8L272.6 113.3L274.5 112.5L279.2 110.7L281.5 110.2L292.0 112.8L292.2 105.5L296.4 104.9L302.0 100.0L305.5 93.7M246.0 115.1L250.9 111.5L253.6 112.8L257.4 117.1L265.9 124.7M272.6 113.3L271.6 117.9L274.5 119.6L279.8 119.3L281.9 125.2M279.8 119.3L280.2 117.6L285.7 115.8L292.0 112.8M268.8 115.8L269.9 118.1L267.9 120.3L268.8 125.6M274.5 112.5L274.5 117.9L278.3 116.4L273.5 116.1M228.3 95.7L229.8 90.5L237.4 86.6L243.5 88.4L252.8 89.3L256.4 87.5L256.6 79.3L263.5 77.7L270.7 74.4L274.5 78.4L279.2 80.6L284.9 78.0L291.6 89.0L298.2 88.4L305.5 93.7M228.3 95.7L227.9 97.5L231.8 101.1L232.7 101.4M305.5 93.7L314.4 89.0L325.8 91.4L326.4 85.3L334.0 87.2L338.1 90.5L349.9 93.7L361.3 92.0M306.4 94.0L312.3 104.6L320.9 107.3L322.8 111.5L333.0 112.0L339.1 114.3L349.5 111.3L352.4 108.6L352.2 105.2L359.4 104.4L361.1 101.9L367.4 100.5L361.3 92.0M361.3 92.0L366.3 90.5L369.5 81.3L374.4 80.6L379.0 83.5L381.9 92.0L387.9 94.6L388.5 98.0L395.5 96.0L392.7 105.2L388.5 106.0L389.1 109.7L387.9 112.5M387.9 112.5L382.8 113.3L380.7 113.8L375.8 118.6M380.1 123.7L383.6 121.8M344.8 159.4L342.1 156.7L339.7 155.9L333.8 157.7L331.9 160.2L329.8 159.6L327.7 158.5L327.5 154.4L324.9 152.7L327.1 146.8L324.7 145.5M324.7 145.5L322.2 142.9L314.4 146.6L308.3 145.9L307.0 146.2L303.0 145.9L293.5 141.2L289.5 138.7L289.1 135.8L290.6 134.9L289.3 131.9L287.4 129.2L281.9 125.2M307.0 146.2L307.0 149.2L301.1 148.7L291.8 144.2L293.5 141.2M308.3 145.9L308.7 148.5L314.4 148.3L314.4 146.6M269.2 155.0L274.5 153.6L271.8 147.7L276.4 145.9L280.0 141.6L281.3 138.3L282.7 136.5L280.2 134.5L280.2 131.0L287.4 129.2M308.7 158.9L308.1 153.8L307.0 149.2L310.2 150.2L315.2 152.3L312.9 155.4L315.0 161.2M315.5 160.0L316.9 154.4L319.5 151.3L324.7 145.5M326.9 182.3L328.1 178.4L326.2 172.6L327.5 169.8L325.4 165.6L329.8 162.0M329.8 162.0L331.9 167.6L333.6 166.2L338.5 167.6L340.2 173.7L334.2 175.3L335.1 179.0M333.8 157.7L337.2 161.8L339.1 165.2L344.0 173.2L340.2 173.7M344.0 173.2L343.9 177.8L340.6 179.2L338.0 181.5M329.8 162.0L329.8 159.6M329.8 189.2L333.6 189.6M347.8 197.6L352.0 199.5L357.7 198.5L359.6 193.2L363.0 193.4M407.5 206.3L407.5 218.8M375.4 219.3L377.3 219.0L377.1 219.7M135.8 130.1L137.3 136.0L132.9 139.4L129.2 142.0L123.1 144.4L123.1 147.4M114.5 146.6L123.1 146.6M123.1 147.4L123.1 150.2L116.8 150.2L116.8 155.4L114.9 156.5L114.9 160.0L107.3 160.0M123.1 147.4L130.5 152.3L141.9 160.4L145.9 164.6L147.6 164.4L147.6 169.6L140.0 172.6L138.7 172.6M130.5 152.3L127.2 152.3L129.2 171.6L121.5 171.8L117.8 171.4L116.4 173.0M145.9 164.6L150.6 163.6L153.8 161.0L162.4 155.4L158.6 153.4L157.7 149.4L158.4 144.9L157.7 141.2L155.4 139.4L153.8 133.8L155.4 130.8L155.9 125.9M157.7 141.2L159.2 137.8L161.4 136.3L161.4 134.5M187.1 137.8L187.1 158.5L209.7 158.5M187.1 158.5L187.1 162.6L185.2 163.6L185.2 171.2L182.3 174.5L182.3 177.1L183.1 180.4L184.4 182.9M162.4 155.4L168.1 156.5L170.0 155.4L185.2 163.6M168.1 156.5L169.0 160.6L169.2 169.0L165.4 175.1M165.4 175.1L158.6 175.9L152.9 176.5L147.2 175.1L146.4 179.0M147.6 169.6L147.2 175.1M143.8 177.7L146.4 179.0M208.9 173.9L208.2 177.1L204.4 181.3L204.4 185.0L202.3 186.5L207.8 192.7L204.2 193.4L198.1 194.7L191.7 191.7L185.6 184.8L184.4 182.9M204.4 183.3L204.0 181.9L201.2 179.0L194.7 182.9L189.9 183.3L185.6 184.8M207.8 192.7L212.0 194.6L217.5 193.8L219.4 193.6L217.5 196.1L217.5 202.9L218.4 204.6M219.4 193.6L225.1 191.9L230.8 186.2L228.9 186.2L221.3 183.3L221.3 179.4M208.9 173.9L211.8 172.6L215.6 173.6L220.2 177.5M208.9 173.9L209.9 168.6L212.8 166.6M214.1 210.3L211.0 207.1L204.2 203.3L197.5 203.3L195.8 204.1M204.2 193.4L206.1 198.2L204.2 200.8L204.2 203.3M198.1 194.7L199.1 197.2L195.8 204.1L195.1 207.9L195.5 209.8M197.5 203.3L198.1 206.0L195.1 207.9M198.1 206.0L197.4 208.6L195.5 209.8M198.1 217.4L194.1 217.6L193.6 219.1L193.9 224.4L196.2 227.1L191.3 224.0L185.2 222.4L185.2 225.9L181.4 226.3L181.4 222.4L181.0 215.3L176.6 214.7L173.0 216.8L170.9 212.6L164.3 212.6L163.0 212.6M163.3 210.5L167.0 210.7L169.8 209.4L173.2 202.5L174.9 194.7L182.3 193.6L191.7 191.7M162.0 234.8L166.2 235.0L174.6 235.0L183.3 235.4L187.7 235.8M181.4 226.3L181.4 232.6L183.3 235.4M177.6 244.3L177.6 250.1L177.6 257.7L170.9 258.1M177.6 244.3L179.5 244.3L179.5 236.8L183.9 236.2L187.7 235.8M177.6 250.1L183.3 251.1L188.2 251.7L190.9 247.8L195.5 244.7M187.7 235.8L190.9 236.2L195.5 244.7L199.1 245.1L202.1 239.8L202.3 233.6L197.4 231.4L194.5 232.0L187.7 235.8M199.1 245.1L200.4 249.4L200.6 254.3L202.1 254.5M202.3 233.6L205.1 232.2L206.7 234.2L207.8 230.0L205.3 223.6L210.8 223.8L216.4 221.5M197.4 231.4L202.3 228.3L202.9 219.7L202.1 219.3L198.1 217.4M202.9 219.7L205.1 223.4M202.3 228.3L205.1 229.2L205.1 232.2M191.8 260.3L193.8 258.4L195.5 260.1L193.2 262.5L191.8 260.3M198.5 252.2L200.4 252.6L200.2 255.1L198.5 254.7L198.5 252.2M108.2 170.6L112.4 169.4L116.4 173.0L117.9 177.7L113.6 177.3L107.9 177.7M107.7 175.3L113.0 175.3L113.0 176.1L107.7 176.3M117.9 177.7L123.8 180.4L124.6 181.9L123.6 186.9L121.7 187.3L117.8 188.3M114.3 184.2L120.0 185.2L117.8 188.3M111.1 180.4L113.6 179.0L113.6 177.3M125.3 193.0L123.6 186.9M124.6 181.9L129.2 181.5L134.3 183.3L134.5 191.7M141.9 189.8L140.5 186.2L139.6 180.2M142.6 189.6L142.6 184.2L141.3 180.4M144.7 189.2L144.9 184.2L146.4 179.0M129.2 181.5L129.5 178.8L131.4 176.1L138.7 172.6M140.0 172.6L143.8 177.7L141.3 180.4L139.6 180.2L134.3 180.4L134.3 183.3M155.8 192.5L157.7 189.0L162.0 188.1L165.4 182.3L166.6 177.5L165.4 175.1M166.6 177.5L169.0 182.3L166.2 182.3L169.0 187.1L167.1 190.0L167.1 192.8L170.2 197.2L164.9 197.2L161.1 197.2L158.2 197.0M169.0 187.1L175.7 184.2L183.1 180.4M170.2 197.2L174.9 194.7M161.1 197.2L161.1 199.5L166.2 198.7L167.1 202.4L167.0 205.2L161.4 208.1L160.7 208.8M158.2 199.5L161.1 199.5M4.1 178.8L0.9 183.7L2.0 187.3L6.6 188.1L11.3 189.6L11.7 196.6L12.5 199.1M12.5 199.1L6.8 198.2L7.7 203.3L6.6 209.4M6.6 209.4L1.1 206.0L-3.5 201.6L-7.7 200.6L-10.1 198.7M-3.5 201.6L-4.0 204.3L-9.2 207.9L-10.5 210.9L-13.0 207.9M25.6 185.2L23.1 190.0L24.3 191.5L18.0 193.8L17.2 197.6L12.5 199.1M30.9 190.0L29.4 193.8L32.2 197.6L36.0 197.0L39.8 196.6L41.4 193.8M24.3 191.5L26.0 192.8L25.8 197.0L32.2 197.6M37.0 190.6L36.0 197.0M6.6 209.4L0.9 210.9L-0.8 215.3L1.5 219.3L5.7 219.5L5.5 222.4L7.6 222.4L9.1 225.3L8.5 230.6L7.4 234.8L5.8 236.8M7.6 222.4L15.5 220.1L15.5 223.8L22.2 227.3L25.2 227.5L25.4 232.6L28.8 232.8L29.0 239.8M29.0 239.8L27.3 238.8L22.2 239.4L20.7 244.7L17.4 245.9L13.8 243.9L11.9 245.9L10.4 246.1M7.4 234.8L9.6 239.0L10.4 246.1M11.9 245.9L9.6 249.4L9.8 254.7L7.2 257.7L6.6 263.4L6.2 269.0M29.0 239.8L29.8 244.5L33.8 244.9L36.4 248.4L35.9 251.7L30.2 251.1L28.3 255.1L33.4 255.6L35.9 251.7M20.7 244.7L30.2 251.1M33.4 255.6L37.4 254.9L30.2 261.6L29.2 266.8L28.6 270.2M30.2 261.6L34.0 263.2L38.0 266.8L38.1 269.5M3.4 163.2L3.4 166.6M10.8 99.7L8.1 98.9L6.0 102.2L3.8 105.5L-2.3 105.5M10.8 99.7L10.8 103.6L11.9 104.9" fill="none" stroke="#c9aacd" stroke-opacity=".62" stroke-width=".7" stroke-linejoin="round"/></g></svg>
<div class="mk" style="left:343.2px;top:97.3px;--c:150,150,150"></div><div class="mk" style="left:173.6px;top:107.8px;--c:255,0,0"></div><div class="mk" style="left:181.3px;top:111.1px;--c:255,255,0"></div><div class="mk" style="left:145.8px;top:126.0px;--c:255,255,0"></div><div class="mk" style="left:208.2px;top:136.6px;--c:150,150,150"></div><div class="mk" style="left:225.0px;top:133.3px;--c:255,126,0"></div><div class="mk" style="left:228.8px;top:152.0px;--c:150,150,150"></div><div class="mk" style="left:231.2px;top:141.9px;--c:255,255,0"></div><div class="mk" style="left:245.6px;top:151.0px;--c:0,228,0"></div><div class="mk" style="left:236.0px;top:150.5px;--c:255,255,0"></div><div class="mk" style="left:214.8px;top:158.4px;--c:255,126,0"></div><div class="mk" style="left:201.9px;top:170.3px;--c:0,228,0"></div><div class="mk" style="left:213.7px;top:183.3px;--c:150,150,150"></div><div class="mk" style="left:213.7px;top:183.3px;--c:255,255,0"></div><div class="mk" style="left:201.9px;top:199.1px;--c:150,150,150"></div><div class="mk" style="left:168.1px;top:177.6px;--c:255,255,0"></div><div class="mk" style="left:113.9px;top:182.4px;--c:255,255,0"></div><div class="mk" style="left:124.7px;top:176.1px;--c:150,150,150"></div><div class="mk" style="left:132.1px;top:190.5px;--c:255,255,0"></div><div class="mk" style="left:139.8px;top:189.1px;--c:255,255,0"></div><div class="mk" style="left:0.1px;top:191.5px;--c:255,255,0"></div><div class="mk" style="left:9.2px;top:177.6px;--c:255,255,0"></div><div class="mk" style="left:-5.7px;top:223.4px;--c:255,0,0"></div><div class="mk" style="left:29.3px;top:270.4px;--c:0,228,0"></div><div class="mk" style="left:251.2px;top:122.5px;--c:0,228,0"></div><div class="mk" style="left:271.2px;top:113.4px;--c:255,255,0"></div><div class="mk" style="left:281.7px;top:110.5px;--c:255,0,0"></div><div class="mk" style="left:270.7px;top:120.6px;--c:255,0,0"></div><div class="mk" style="left:285.6px;top:110.1px;--c:255,255,0"></div><div class="mk" style="left:271.7px;top:132.1px;--c:255,126,0"></div><div class="mk" style="left:282.2px;top:136.9px;--c:255,0,0"></div><div class="mk" style="left:279.8px;top:131.2px;--c:255,126,0"></div><div class="mk" style="left:286.5px;top:144.0px;--c:255,0,0"></div><div class="mk" style="left:302.3px;top:145.4px;--c:200,240,0"></div><div class="mk" style="left:307.9px;top:156.4px;--c:150,150,150"></div><div class="mk" style="left:312.9px;top:153.2px;--c:255,0,0"></div><div class="mk" style="left:268.0px;top:151.4px;--c:255,126,0"></div><div class="mk" style="left:278.7px;top:163.6px;--c:255,126,0"></div><div class="mk" style="left:289.7px;top:166.0px;--c:255,255,0"></div><div class="mk" style="left:293.1px;top:174.1px;--c:0,228,0"></div><div class="mk" style="left:292.1px;top:186.6px;--c:0,228,0"></div><div class="mk" style="left:323.0px;top:168.2px;--c:255,126,0"></div><div class="mk" style="left:340.9px;top:159.5px;--c:255,255,0"></div><div class="mk" style="left:335.6px;top:165.2px;--c:255,0,0"></div><div class="mk" style="left:355.7px;top:155.2px;--c:255,255,0"></div><div class="mk" style="left:343.3px;top:179.6px;--c:255,255,0"></div><div class="mk" style="left:343.1px;top:212.4px;--c:255,255,0"></div><div class="mk" style="left:371.3px;top:138.0px;--c:255,0,0"></div><div class="mk" style="left:361.2px;top:117.9px;--c:0,228,0"></div><div class="mk" style="left:375.6px;top:113.6px;--c:255,255,0"></div><div class="ml" style="left:343.2px;top:97.3px">N/A</div><div class="ml" style="left:173.6px;top:107.8px">155</div><div class="ml" style="left:181.3px;top:111.1px">87</div><div class="ml" style="left:145.8px;top:126.0px">63</div><div class="ml" style="left:208.2px;top:136.6px">N/A</div><div class="ml" style="left:225.0px;top:133.3px">117</div><div class="ml" style="left:228.8px;top:152.0px">N/A</div><div class="ml" style="left:231.2px;top:141.9px">94</div><div class="ml" style="left:245.6px;top:151.0px">36</div><div class="ml" style="left:236.0px;top:150.5px">93</div><div class="ml" style="left:214.8px;top:158.4px">119</div><div class="ml" style="left:201.9px;top:170.3px">45</div><div class="ml" style="left:213.7px;top:183.3px">N/A</div><div class="ml" style="left:213.7px;top:183.3px">59</div><div class="ml" style="left:201.9px;top:199.1px">N/A</div><div class="ml" style="left:168.1px;top:177.6px">77</div><div class="ml" style="left:113.9px;top:182.4px">84</div><div class="ml" style="left:124.7px;top:176.1px">N/A</div><div class="ml" style="left:132.1px;top:190.5px">78</div><div class="ml" style="left:139.8px;top:189.1px">91</div><div class="ml" style="left:0.1px;top:191.5px">64</div><div class="ml" style="left:9.2px;top:177.6px">56</div><div class="ml" style="left:29.3px;top:270.4px">39</div><div class="ml" style="left:251.2px;top:122.5px">35</div><div class="ml" style="left:271.2px;top:113.4px">96</div><div class="ml" style="left:281.7px;top:110.5px">151</div><div class="ml" style="left:270.7px;top:120.6px">162</div><div class="ml" style="left:285.6px;top:110.1px">170</div><div class="ml" style="left:271.7px;top:132.1px">112</div><div class="ml" style="left:282.2px;top:136.9px">174</div><div class="ml" style="left:279.8px;top:131.2px">104</div><div class="ml" style="left:286.5px;top:144.0px">161</div><div class="ml" style="left:302.3px;top:145.4px">68</div><div class="ml" style="left:307.9px;top:156.4px">N/A</div><div class="ml" style="left:312.9px;top:153.2px">177</div><div class="ml" style="left:268.0px;top:151.4px">134</div><div class="ml" style="left:278.7px;top:163.6px">144</div><div class="ml" style="left:289.7px;top:166.0px">60</div><div class="ml" style="left:293.1px;top:174.1px">42</div><div class="ml" style="left:292.1px;top:186.6px">25</div><div class="ml" style="left:323.0px;top:168.2px">102</div><div class="ml" style="left:340.9px;top:159.5px">55</div><div class="ml" style="left:335.6px;top:165.2px">168</div><div class="ml" style="left:355.7px;top:155.2px">96</div><div class="ml" style="left:343.3px;top:179.6px">89</div><div class="ml" style="left:343.1px;top:212.4px">91</div><div class="ml" style="left:371.3px;top:138.0px">154</div><div class="ml" style="left:361.2px;top:117.9px">45</div><div class="ml" style="left:375.6px;top:113.6px">52</div>
<div id="tip"></div>
<div id="pop">
<div class="abs" style="left:0;right:0;top:10.2px">Bishkek<br>2020-11-19 7:00 PM<br>(LT)</div>
<div class="abs" style="left:10px;top:40.5px;width:87px;height:39px;border:1px solid #04477c;background:#fff">
<div class="abs" style="left:0;top:0;width:85px;height:18px;background:#04477c;color:#fff;font-weight:bold;font-size:9.4px;line-height:15.6px"><span class="abs" style="left:0;width:55px">Pollutant</span><span class="abs" style="left:55px;width:30px">AQI</span></div>
<div class="abs" style="left:0;top:18px;width:55px;height:19px;line-height:19px;font-size:9.1px;color:#333;border-right:1px solid #04477c">PM2.5</div>
<div class="abs" style="left:54.8px;top:18px;width:30.2px;height:19px;line-height:19px;background:#f00;color:#fff;font-weight:bold;font-size:9px">151</div>
</div></div>
</div>

<div class="ph" style="left:499.5px;top:5px;width:222.5px;height:23px">Select a City</div>
<div class="sel" style="left:499.5px;top:29px;width:223px;height:24.5px">Bishkek<span class="x">×</span><span class="a"></span></div>
<div class="ph" style="left:499.5px;top:68px;width:222.5px;height:23px">Select a Parameter</div>
<div class="sel" style="left:499.5px;top:92px;width:223px;height:24.5px">PM2.5<span class="x">×</span><span class="a"></span></div>
<div class="abs" style="left:499.5px;top:130px;width:223px;height:48.500px;background:#fff;border:1px solid #c8c8c8"><div class="abs" style="left:6px;top:7px;font-size:9.2px;font-weight:bold;line-height:11px;color:#333">Bishkek</div>
<svg class="abs" style="left:191.5px;top:17px" width="23.500" height="23" viewBox="0 0 24 24"><rect width="24" height="24" fill="#f4a83a"/><circle cx="6.2" cy="17.800" r="2.400" fill="#fff"/><path d="M3.800 10.200a10 10 0 0 1 10 10M3.800 4.800a15.400 15.400 0 0 1 15.400 15.400" fill="none" stroke="#fff" stroke-width="3"/></svg></div>
<div class="abs" style="left:498.5px;top:186px;width:228px;font-size:7.35px;line-height:13px;color:#555;white-space:nowrap">Note: Values above 500 are considered Beyond the AQI. Follow<br>recommendations for the Hazardous category. Additional information<br>on reducing exposure to extremely high levels of particle pollution is<br>available <a>here</a>.</div>

<div class="abs" style="left:10px;top:337px;width:712px;height:1px;background:#aaa"></div>
<div class="tab" style="left:10px;width:72px;background:#fff;border:1px solid #aaa;border-top:2px solid #04477c;border-bottom:0;color:#334;line-height:20.5px;height:20px">AQI</div>
<div class="tab off" style="left:84px;width:111px">Concentration</div>
<div class="tab off" style="left:197px;width:92px">Historical</div>
<div class="abs" style="left:10px;top:345px;font-size:9.3px;line-height:12px;color:#333;white-space:nowrap">Learn more about how the Air Quality Index [AQI] is calculated from the EPA <a style="font-weight:normal">here</a>.</div>

<div class="abs" style="left:10px;top:371px;width:534px;height:213px;background:#fff"></div>
<div class="abs" style="left:10px;top:376px;width:534px;text-align:center;font-size:11.500px;line-height:14px;color:#333;letter-spacing:.55px">Bishkek – PM2.5</div>
<div class="abs" style="left:17px;top:465.5px;width:20px;text-align:center;font-size:7.5px;line-height:8px;transform:rotate(-90deg);color:#333">AQI</div>
<svg class="abs" style="left:0;top:0" width="730" height="584" viewBox="0 0 730 584"><line x1="60.5" x2="537.5" y1="508.96" y2="508.96" stroke="#e6e6e6"/><line x1="60.5" x2="537.5" y1="484.72" y2="484.72" stroke="#e6e6e6"/><line x1="60.5" x2="537.5" y1="460.48" y2="460.48" stroke="#e6e6e6"/><line x1="60.5" x2="537.5" y1="436.24" y2="436.24" stroke="#e6e6e6"/><line x1="60.5" x2="537.5" y1="412.00" y2="412.00" stroke="#e6e6e6"/><line x1="60.0" x2="538.0" y1="533.20" y2="533.20" stroke="#ccd6eb"/><line x1="60.50" x2="60.50" y1="533.20" y2="539.50" stroke="#ccd6eb"/><line x1="80.38" x2="80.38" y1="533.20" y2="539.50" stroke="#ccd6eb"/><line x1="100.25" x2="100.25" y1="533.20" y2="539.50" stroke="#ccd6eb"/><line x1="120.12" x2="120.12" y1="533.20" y2="539.50" stroke="#ccd6eb"/><line x1="140.00" x2="140.00" y1="533.20" y2="539.50" stroke="#ccd6eb"/><line x1="159.88" x2="159.88" y1="533.20" y2="539.50" stroke="#ccd6eb"/><line x1="179.75" x2="179.75" y1="533.20" y2="539.50" stroke="#ccd6eb"/><line x1="199.62" x2="199.62" y1="533.20" y2="539.50" stroke="#ccd6eb"/><line x1="219.50" x2="219.50" y1="533.20" y2="539.50" stroke="#ccd6eb"/><line x1="239.38" x2="239.38" y1="533.20" y2="539.50" stroke="#ccd6eb"/><line x1="259.25" x2="259.25" y1="533.20" y2="539.50" stroke="#ccd6eb"/><line x1="279.12" x2="279.12" y1="533.20" y2="539.50" stroke="#ccd6eb"/><line x1="299.00" x2="299.00" y1="533.20" y2="539.50" stroke="#ccd6eb"/><line x1="318.88" x2="318.88" y1="533.20" y2="539.50" stroke="#ccd6eb"/><line x1="338.75" x2="338.75" y1="533.20" y2="539.50" stroke="#ccd6eb"/><line x1="358.62" x2="358.62" y1="533.20" y2="539.50" stroke="#ccd6eb"/><line x1="378.50" x2="378.50" y1="533.20" y2="539.50" stroke="#ccd6eb"/><line x1="398.38" x2="398.38" y1="533.20" y2="539.50" stroke="#ccd6eb"/><line x1="418.25" x2="418.25" y1="533.20" y2="539.50" stroke="#ccd6eb"/><line x1="438.12" x2="438.12" y1="533.20" y2="539.50" stroke="#ccd6eb"/><line x1="458.00" x2="458.00" y1="533.20" y2="539.50" stroke="#ccd6eb"/><line x1="477.88" x2="477.88" y1="533.20" y2="539.50" stroke="#ccd6eb"/><line x1="497.75" x2="497.75" y1="533.20" y2="539.50" stroke="#ccd6eb"/><line x1="517.62" x2="517.62" y1="533.20" y2="539.50" stroke="#ccd6eb"/><line x1="537.50" x2="537.50" y1="533.20" y2="539.50" stroke="#ccd6eb"/><rect x="65.69" y="495.83" width="9.500" height="37.07" fill="#ff0000" stroke="#3a2412" stroke-opacity=".85"/><rect x="85.56" y="495.83" width="9.500" height="37.07" fill="#ff0000" stroke="#3a2412" stroke-opacity=".85"/><rect x="105.44" y="496.43" width="9.500" height="36.47" fill="#ff0000" stroke="#3a2412" stroke-opacity=".85"/><rect x="125.31" y="500.19" width="9.500" height="32.71" fill="#ff7e00" stroke="#3a2412" stroke-opacity=".85"/><rect x="145.19" y="502.98" width="9.500" height="29.92" fill="#ff7e00" stroke="#3a2412" stroke-opacity=".85"/><rect x="165.06" y="504.31" width="9.500" height="28.59" fill="#ff7e00" stroke="#3a2412" stroke-opacity=".85"/><rect x="184.94" y="508.43" width="9.500" height="24.47" fill="#ff7e00" stroke="#3a2412" stroke-opacity=".85"/><rect x="204.81" y="512.92" width="9.500" height="19.98" fill="#ffff00" stroke="#3a2412" stroke-opacity=".85"/><rect x="224.69" y="517.04" width="9.500" height="15.86" fill="#ffff00" stroke="#3a2412" stroke-opacity=".85"/><rect x="244.56" y="518.01" width="9.500" height="14.89" fill="#ffff00" stroke="#3a2412" stroke-opacity=".85"/><rect x="264.44" y="518.01" width="9.500" height="14.89" fill="#ffff00" stroke="#3a2412" stroke-opacity=".85"/><rect x="284.31" y="517.04" width="9.500" height="15.86" fill="#ffff00" stroke="#3a2412" stroke-opacity=".85"/><rect x="304.19" y="515.70" width="9.500" height="17.20" fill="#ffff00" stroke="#3a2412" stroke-opacity=".85"/><rect x="324.06" y="514.25" width="9.500" height="18.65" fill="#ffff00" stroke="#3a2412" stroke-opacity=".85"/><rect x="343.94" y="512.92" width="9.500" height="19.98" fill="#ffff00" stroke="#3a2412" stroke-opacity=".85"/><rect x="363.81" y="514.25" width="9.500" height="18.65" fill="#ffff00" stroke="#3a2412" stroke-opacity=".85"/><rect x="383.69" y="514.01" width="9.500" height="18.89" fill="#ffff00" stroke="#3a2412" stroke-opacity=".85"/><rect x="403.56" y="512.31" width="9.500" height="20.59" fill="#ffff00" stroke="#3a2412" stroke-opacity=".85"/><rect x="423.44" y="507.71" width="9.500" height="25.19" fill="#ff7e00" stroke="#3a2412" stroke-opacity=".85"/><rect x="443.31" y="496.07" width="9.500" height="36.83" fill="#ff0000" stroke="#3a2412" stroke-opacity=".85"/><rect x="463.19" y="494.62" width="9.500" height="38.28" fill="#ff0000" stroke="#3a2412" stroke-opacity=".85"/><rect x="483.06" y="496.07" width="9.500" height="36.83" fill="#ff0000" stroke="#3a2412" stroke-opacity=".85"/><rect x="502.94" y="498.01" width="9.500" height="34.89" fill="#ff7e00" stroke="#3a2412" stroke-opacity=".85"/><rect x="522.81" y="496.80" width="9.500" height="36.10" fill="#ff0000" stroke="#3a2412" stroke-opacity=".85"/></svg><div class="yl" style="top:527.6px">0</div><div class="yl" style="top:503.4px">100</div><div class="yl" style="top:479.1px">200</div><div class="yl" style="top:454.9px">300</div><div class="yl" style="top:430.6px">400</div><div class="yl" style="top:406.4px">500</div><div class="xl" style="left:-29.3px;top:536.9px;letter-spacing:0px">8 PM</div><div class="xl" style="left:-9.4px;top:536.9px;letter-spacing:0px">9 PM</div><div class="xl" style="left:10.5px;top:536.9px;letter-spacing:0.25px">10 PM</div><div class="xl" style="left:30.4px;top:536.9px;letter-spacing:0.25px">11 PM</div><div class="xl" style="left:50.2px;top:536.9px;letter-spacing:0.5px">Nov 19, 2020 12 AM</div><div class="xl" style="left:70.1px;top:536.9px;letter-spacing:0px">1 AM</div><div class="xl" style="left:90.0px;top:536.9px;letter-spacing:0px">2 AM</div><div class="xl" style="left:109.9px;top:536.9px;letter-spacing:0px">3 AM</div><div class="xl" style="left:129.7px;top:536.9px;letter-spacing:0px">4 AM</div><div class="xl" style="left:149.6px;top:536.9px;letter-spacing:0px">5 AM</div><div class="xl" style="left:169.5px;top:536.9px;letter-spacing:0px">6 AM</div><div class="xl" style="left:189.4px;top:536.9px;letter-spacing:0px">7 AM</div><div class="xl" style="left:209.2px;top:536.9px;letter-spacing:0px">8 AM</div><div class="xl" style="left:229.1px;top:536.9px;letter-spacing:0px">9 AM</div><div class="xl" style="left:249.0px;top:536.9px;letter-spacing:0.25px">10 AM</div><div class="xl" style="left:268.9px;top:536.9px;letter-spacing:0.25px">11 AM</div><div class="xl" style="left:288.7px;top:536.9px;letter-spacing:0.25px">12 PM</div><div class="xl" style="left:308.6px;top:536.9px;letter-spacing:0px">1 PM</div><div class="xl" style="left:328.5px;top:536.9px;letter-spacing:0px">2 PM</div><div class="xl" style="left:348.4px;top:536.9px;letter-spacing:0px">3 PM</div><div class="xl" style="left:368.2px;top:536.9px;letter-spacing:0px">4 PM</div><div class="xl" style="left:388.1px;top:536.9px;letter-spacing:0px">5 PM</div><div class="xl" style="left:408.0px;top:536.9px;letter-spacing:0px">6 PM</div><div class="xl" style="left:427.9px;top:536.9px;letter-spacing:0px">7 PM</div>
<div class="abs" style="left:555px;top:370.5px;width:168px;height:209.5px;border:1px solid #04477c;background:#eee">
<div class="abs" style="left:0;top:0;width:166px;height:49px;background:#04477c;color:#fff;font-weight:bold;text-align:center;font-size:10px;line-height:14px"><div style="margin-top:4px">Current Conditions</div><div style="font-size:8.5px;line-height:13.500px;letter-spacing:-.2px">observed at</div><div>Nov 19, 2020 7:00 PM (LT)</div></div>
<div class="abs" style="left:0;top:49px;width:166px;height:77px;background:#f00;color:#fff;font-weight:bold;text-align:center;font-size:13.2px;line-height:19px;padding-top:10px">151 AQI<br>Unhealthy<br>PM2.5</div>
<div class="abs" style="left:0;top:126px;width:166px;text-align:center;font-size:8px;font-weight:bold;line-height:10px;padding-top:6.5px;color:#222">Health Message</div>
<div class="abs" style="left:3.5px;top:147px;width:166px;font-size:8px;line-height:14px;color:#444;white-space:nowrap">Everyone may begin to experience health<br>effects when AQI values are between 151<br>and 200. Members of sensitive groups may<br>experience more serious health effects.</div>
</div>
</body></html>
